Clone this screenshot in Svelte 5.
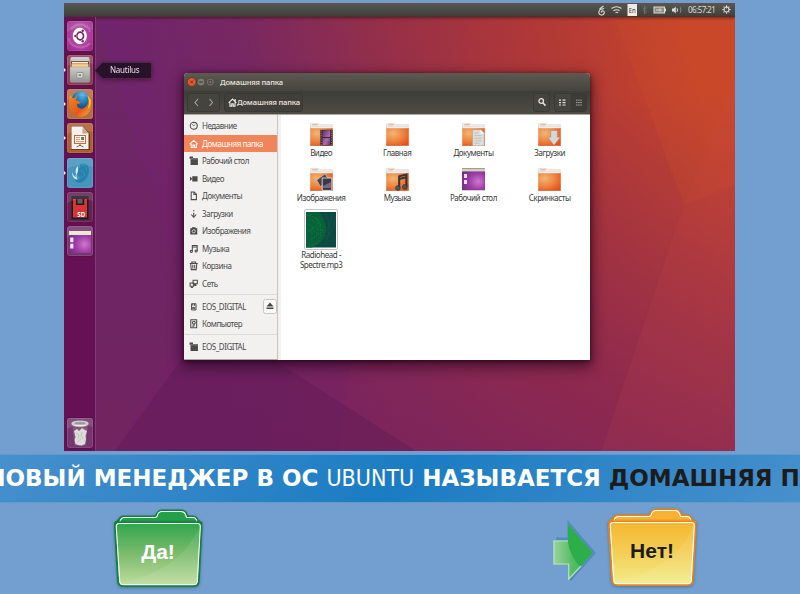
<script>
  const places = [
    ['clock', 'Недавние'], ['home', 'Домашняя папка'], ['folder', 'Рабочий стол'],
    ['video', 'Видео'], ['doc', 'Документы'], ['down', 'Загрузки'], ['camera', 'Изображения'],
    ['music', 'Музыка'], ['trash', 'Корзина'], ['net', 'Сеть']
  ];
  const files = [
    ['video', 'Видео'], ['plain', 'Главная'], ['docs', 'Документы'], ['down', 'Загрузки'],
    ['pics', 'Изображения'], ['music', 'Музыка'], ['desk', 'Рабочий стол'], ['plain', 'Скринкасты']
  ];
  const apps = [
    ['dash', false], ['cabinet', true], ['firefox', true], ['impress', true],
    ['bird', true], ['sd', false], ['desk', false]
  ];
</script>

{#snippet placeIcon(kind)}
  <svg class="pi" viewBox="0 0 10 10" fill="none" stroke="currentColor" stroke-width="1.1">
    {#if kind === 'clock'}
      <circle cx="5" cy="5" r="3.7" /><path d="M5 5.2 3.4 3.4M5 5.2 6.6 3.8M5 1v1.4" stroke-width=".8" />
    {:else if kind === 'home'}
      <path d="M.9 5.4 5 1.5l4.1 3.9M2.3 5v4h1.9V6.3h1.6V9h1.9V5" />
    {:else if kind === 'folder'}
      <path d="M.6.6h3.6v1.6H9.4V9.400H1.600V3H.6z" fill="currentColor" stroke="none" /><path d="M1.8 3h7.500" stroke="#f2f1f0" stroke-width=".4" />
    {:else if kind === 'video'}
      <path d="M3.4 2.4H9v5.400H3.4zM1 3l2 1.200v1.600L1 7.200z" fill="currentColor" stroke="none" />
    {:else if kind === 'doc'}
      <path d="M2.3 1h3.2l2.3 2.3v5.800H2.3zM5.2 1.2v2.4h2.4" />
    {:else if kind === 'down'}
      <path d="M5 4v4.7M2.4 5.8 5 8.7l2.6-2.9M5 1v1.3" />
    {:else if kind === 'camera'}
      <path d="M1.300 2.4h1.8V1.2h3.8v1.2h1.8V9H1.300z" fill="currentColor" stroke="none" /><circle cx="5" cy="5.6" r="1.7" stroke="#f2f1f0" stroke-width=".8" />
    {:else if kind === 'music'}
      <path d="M3.5 7.7V1.6H8.6V7.3M3.5 3.1h5" /><circle cx="2.4" cy="7.8" r="1.1" /><circle cx="7.5" cy="7.4" r="1.1" />
    {:else if kind === 'trash'}
      <path d="M.8 2.6h8.4M3 2.4V1h4v1.4M1.8 3.2 2.4 9.1h5.2l.6-5.9M4 4v3.8M6 4v3.8" />
    {:else if kind === 'net'}
      <path d="M4.3 1.3h4.5v3.8H4.3zM1.2 4.2h3.8v3.4H1.2zM2 9h2.3M6 6.6h2" /><path d="M4.5 5.3h3V7h-3z" fill="currentColor" stroke="none" />
    {:else if kind === 'card'}
      <path d="M2.6 1.8h4.8v6.6H2.6zM4 2v2M5.8 2v2M3.7 5.7h2.6v1.4H3.7z" stroke-width="1" />
    {:else}
      <path d="M1.900.8h6.200v8.400H1.900z" /><circle cx="5.1" cy="3.900" r="1.5" /><path d="M3.500 7.500h1.500l.7-2.600" />
    {/if}
  </svg>
{/snippet}

{#snippet deskIcon()}
  <path d="M0 1h23v21H0z" fill="url(#desk)" stroke="#6f3d72" stroke-width=".5" />
  <path d="M0 .4h23v3H0z" fill="#d9d4bd" /><path d="M0 .6h23" stroke="#77715f" stroke-width=".6" />
  <path d="M2 6h3v4H2zM2 12h3v4H2z" fill="#eddcee" />
{/snippet}

{#snippet fileIcon(kind)}
  <svg class="fi" viewBox="0 0 23 23">
    {#if kind === 'desk'}
      {@render deskIcon()}
    {:else}
      <path d="M.5 5V1Q.5.4 1 .4h7L10 1.7h12.3V6H.5z" fill="#f3efec" stroke="#d2cdca" stroke-width=".6" />
      <path d="M2.3 1.8h5.4" stroke="#f0a16b" /><path d="M.5 3.6h22" stroke="#d8d4d1" stroke-width=".5" />
      <path d="M.2 5.2h22.6V22q0 .6-.6.6H.8q-.6 0-.6-.6z" fill="url(#fold)" />
      <path d="M.2 22.4h22.6" stroke="#b84416" stroke-width=".6" />
      {#if kind === 'video'}
        <path d="M10.3 6.8h12.2v15.7H10.3z" fill="#36282f" /><path d="M12.5 7.3h7.8v6.8h-7.8zM12.5 15h7.8v7h-7.8z" fill="url(#film)" />
        <path d="M11.3 7.5v15M21.5 7.5v15" stroke="#a08c88" stroke-width=".8" stroke-dasharray="1 1.3" />
      {:else if kind === 'docs'}
        <path d="M10.6 6.8h8.3l3.3 3.6v12.4H10.6z" fill="#dededc" stroke="#a8a39f" stroke-width=".5" />
        <path d="M12.4 10h4M12.4 12.6h7.5M12.4 15.2h7.5M12.4 17.8h7.5M12.4 20.2h5" stroke="#b7b7b7" stroke-width=".8" />
        <path d="M18.6 6.8v3.7h3.6z" fill="#fff" />
      {:else if kind === 'down'}
        <path d="M12.7 7.5h6.6v6.8h3L16 22.2l-6.3-7.9h3z" fill="#d7d7d5" stroke="#9b8a82" stroke-width=".5" />
      {:else if kind === 'pics'}
        <path d="M6.7 12.1 15 6l4 6-8.5 6.8z" fill="#4a414c" stroke="#c4bdbd" stroke-width=".7" />
        <path d="M12.2 10h9.6v12.4h-9.6z" fill="#3f3747" stroke="#eee" stroke-width=".8" /><path d="M13 18l8-4v6h-8z" fill="#75677c" />
      {:else if kind === 'music'}
        <path d="M13.2 20V8.3l7.2-1.8v12" fill="none" stroke="#343536" stroke-width="2.1" /><path d="M13.2 10.9l7.2-1.6" stroke="#343536" stroke-width="2" />
        <circle cx="11.9" cy="20" r="2.3" fill="#555658" stroke="#29292a" stroke-width=".7" /><circle cx="18.8" cy="18.9" r="2.3" fill="#555658" stroke="#29292a" stroke-width=".7" />
      {/if}
    {/if}
  </svg>
{/snippet}

{#snippet appIcon(kind)}
  <svg class="tile {kind}" viewBox="0 0 26 30">
    {#if kind === 'dash'}
      <path d="M4 8c5-7 17-6 19 3M2 17c0 9 14 13 21 5" fill="none" stroke="#e6a9d9" stroke-opacity=".3" stroke-width="2" />
      <ellipse cx="12.8" cy="15" rx="7" ry="8.2" fill="#fff" />
      <ellipse cx="13.2" cy="15" rx="3.3" ry="3.9" fill="none" stroke="#792165" stroke-width="1.7" />
      <path d="M8 15h2.5M14.8 10.8l1.3-2M14.8 19l1.3 2" stroke="#fff" stroke-width="1.2" />
      <g fill="#792165"><circle cx="8.4" cy="15" r="1.2" /><circle cx="15.7" cy="9.7" r="1.2" /><circle cx="15.7" cy="20.2" r="1.2" /></g>
    {:else if kind === 'cabinet'}
      <path d="M3.5 3.5Q3.5 2 5 2h16q1.5 0 1.5 1.5V26H3.5z" fill="#c9c7c3" />
      <path d="M4 6h18v7H4z" fill="#5d4637" /><path d="M5 7.5h16v6H5z" fill="#e4954e" /><path d="M4.5 9.3h17v4h-17z" fill="#f5cf91" /><path d="M5 7.6h16" stroke="#fff" />
      <path d="M3 12h20v13.5q0 2-2 2H5q-2 0-2-2z" fill="url(#metal)" stroke="#888" stroke-width=".4" />
      <rect x="9.8" y="17.5" width="6.2" height="5.5" rx=".8" fill="#ddd" stroke="#81817d" stroke-width=".8" /><rect x="11.7" y="19.2" width="2.4" height="2" fill="#81817d" />
    {:else if kind === 'firefox'}
      <ellipse cx="13.500" cy="13.500" rx="9.6" ry="11.6" fill="url(#globe)" />
      <path d="M3.5 5.5C1 12 1.5 23 9 26.5c8 4 16-3 15.2-12-.3-4-2-7-4-8.5 3 7-.5 12.5-4.5 13.5-4 .8-6.4-1.8-5.6-4.8 1.4 1 3.2-.5 4-1.4-2-.3-2.6-2.2-5-1.8-.5-1.6.5-3 1.8-4-2-.1-3 .6-3.8 1.7C5.5 9 4 8 3.5 5.5z" fill="url(#fox)" />
      <path d="M20 6c3 5 2 11 .5 14 3-2 4-6 3-10z" fill="#f9cf35" />
    {:else if kind === 'impress'}
      <path d="M4 3h12l7 8v16H4z" fill="#41210f" opacity=".55" /><path d="M4.5 3.5h11l6 7v15.5h-17z" fill="#f4f3ef" /><path d="M15.5 3.5v7h6z" fill="#caa58e" />
      <path d="M7.500 12.500h11v8h-11z" fill="#fff8ee" stroke="#cb6a45" stroke-width="1.1" /><path d="M9 14.5h4M9 16.5h4M9 18.5h8" stroke="#dd9c78" /><path d="M14 14h3v3h-3z" fill="#55885e" />
      <path d="M13 21v1.5M9.5 24l3.5-1.7 3.5 1.7" stroke="#8b4c2e" fill="none" stroke-width=".9" />
    {:else if kind === 'bird'}
      <path d="M13 6c4-2 8 0 8.5 4 1 5-1 11-6 14-3 1.4-6 .5-8-2 3 .5 5-1 6-3-2 0-3-2-3-4 0-3 1-5 3-6z" fill="#2780ad" />
      <path d="M14 8c4-1 7 2 5 5M12 13c3-1 6 1 5 4M11 20c3 0 5-1 7-3" stroke="#3b93bc" fill="none" />
      <path d="M5.2 14c0 5 2 7 5.5 7.5-1-1.5-1.6-3.5-1.2-5.6-1 1-1 2-.6 3.4-2-.8-3-2.6-3.7-5.3zM10.5 8c-2 3-2.5 6-1 9 1-3 2.5-5 1-9z" fill="#dbecef" />
    {:else if kind === 'sd'}
      <path d="M4.500 4h17v23.500h-17z" fill="#25191c" /><path d="M6 7H9v6h8.2V7H20v18.5H6z" fill="#d43634" /><path d="M10.500 7h5v4.5h-5z" fill="#675b5e" />
      <text x="10.3" y="24.500" fill="#fff" font-family="Noto Sans, sans-serif" font-weight="700" font-size="7.500" textLength="8" lengthAdjust="spacingAndGlyphs">SD</text>
    {:else if kind === 'desk'}
      <path d="M2 5.5h22V27H2z" fill="url(#desk)" /><path d="M2 5h22v4H2z" fill="#e9e5cf" /><path d="M3.2 11.5h3.2v4.7H3.2zM3.2 17.7h3.2v4.7H3.2z" fill="#f2e2f4" />
    {:else}
      <path d="M5.6 8h15L19 27q-6 2-11.500 0z" fill="#a9a4a8" opacity=".3" /><path d="M7 13l3-2 2 2 3-3 3 2 2 1-1.5 5 .5 3-1 5-3 1.500-4-.5-2.500-1-1-4 1-3z" fill="#dddcda" />
      <path d="M9 15l3 2-1 4M15 14l-1 5 3 2M10 24l4-3" stroke="#b9b6b5" stroke-width=".7" fill="none" />
      <ellipse cx="13" cy="5.700" rx="8.7" ry="3.300" fill="#c6c5c4" /><ellipse cx="13" cy="5.200" rx="5.500" ry="1.300" fill="#8f8790" /><path d="M7.500 7.500h11" stroke="#eee" />
    {/if}
    <path d="M0 0h26v9Q13 4 0 11z" fill="#fff" opacity=".12" />
    <rect x=".5" y=".5" width="25" height="29" rx="2" fill="none" stroke="#fff" stroke-opacity=".1" />
  </svg>
{/snippet}

{#snippet answer(id, dark, a, b, c, tone)}
  <svg class="answer" viewBox="0 0 94 84">
    <defs>
      <linearGradient {id} x2="0" y2="1"><stop stop-color={a} /><stop offset=".5" stop-color={b} /><stop offset="1" stop-color={c} /></linearGradient>
    </defs>
    <path d="M6 22L4 17l4-3q1-3.500 5-3.500h30q2.500-.5 3-2.500 2-3.500 5-3.500h19q4 0 5.500 3.500l1.500 2.500h5q4 .5 4.500 4L90.500 17 89 22z" fill={tone} stroke={dark} stroke-width="2.200" />
    <path d="M9 15.500q1-4 4.500-4H44q2 0 2.500-2.500 1-3.500 4.500-3.500h19q3.500 0 4.500 3l1 3H82q3 0 4 4" fill="none" stroke="#fff" stroke-width="1.100" />
    <path d="M7.500 15.500h80" stroke={dark} stroke-width="2" opacity=".55" />
    <path d="M7 17h80.500q3.500 0 3 5L87.700 75.500q-.3 4.500-4.700 4.500H12q-4.500 0-4.800-4.500L4 22q-.4-5 3-5z" fill="url(#{id})" stroke={dark} stroke-width="2" />
    <path d="M88 23Q65 68 8.500 76l1 2.500h74q2.500 0 2.500-3z" fill="#fff" opacity=".09" />
    <path d="M8 17.500h78.500q3 0 2.800 3.500L86.300 75q-.3 3.700-4 3.700H12.500q-3.500 0-3.800-3.700L5.300 21Q5 17.500 8 17.500z" fill="none" stroke="#fff" stroke-width="1.100" />
  </svg>
{/snippet}

<svg class="defs" width="0" height="0">
  <defs>
    <radialGradient id="fold" cx=".3" cy=".3" r=".85"><stop stop-color="#f2b673" /><stop offset=".5" stop-color="#ee8744" /><stop offset="1" stop-color="#e65118" /></radialGradient>
    <radialGradient id="desk" cx=".7" cy=".6" r=".75"><stop stop-color="#d078c8" /><stop offset=".5" stop-color="#a03eaa" /><stop offset="1" stop-color="#713083" /></radialGradient>
    <linearGradient id="film" x2="1" y2="1"><stop stop-color="#5a3260" /><stop offset=".6" stop-color="#b068b5" /><stop offset="1" stop-color="#583457" /></linearGradient>
    <linearGradient id="metal" x2="0" y2="1"><stop stop-color="#cfcfcc" /><stop offset="1" stop-color="#92928f" /></linearGradient>
    <radialGradient id="globe" cx=".6" cy=".2"><stop stop-color="#45b5ea" /><stop offset="1" stop-color="#16558f" /></radialGradient>
    <linearGradient id="fox" x2="1" y2="1"><stop stop-color="#f28b1e" /><stop offset=".6" stop-color="#e7551d" /><stop offset="1" stop-color="#f8b92c" /></linearGradient>
  </defs>
</svg>

<main>
  <section class="desktop">
    <svg class="wall" viewBox="0 0 671 448" preserveAspectRatio="none">
      <defs>
        <linearGradient id="bg" gradientUnits="userSpaceOnUse" x1="80" y1="190" x2="630" y2="60"><stop stop-color="#6f246c" /><stop offset=".23" stop-color="#772862" /><stop offset=".5" stop-color="#983047" /><stop offset=".75" stop-color="#b03936" /><stop offset="1" stop-color="#c8472b" /></linearGradient>
        <linearGradient id="low" x2="0" y2="1"><stop offset=".2" stop-color="#762060" stop-opacity="0" /><stop offset="1" stop-color="#762060" stop-opacity=".72" /></linearGradient>
      </defs>
      <path d="M0 0h671v448H0z" fill="url(#bg)" /><path d="M0 0h671v448H0z" fill="url(#low)" />
      <path d="M550 14l70 188 51-20V14z" fill="#cf4d2a" opacity=".22" />
      <path d="M671 75L620 202 537 448h134z" fill="#d14a46" opacity=".15" />
      <path d="M411 14L310 175l-35 273h262l83-246L550 14z" fill="#be3a3d" opacity=".05" />
      <path d="M31 14l98 297-78 137H31z" fill="#6a2a58" opacity=".3" />
      <path d="M51 448L124 347l70 0 158 101z" fill="#55164f" opacity=".3" />
    </svg>
    <header class="topbar">
      <svg class="tray" viewBox="0 0 84 12" fill="none" stroke="#dfdbd2" stroke-width="1">
        <path d="M7.500 2L4 4.500v1l4-1M4 5.500Q1.500 9.500 4.500 10.800q3 .8 3.800-1.800.3-2-1.500-2.300-1.800.3-1.300 2" stroke-width="1.100" />
        <path d="M15.500 4.500q5-3.500 10 0M17.500 6.800q3-2.200 6 0M19.500 8.800q1.300-1 2.600 0" stroke-width="1.100" />
        <rect x="31.500" y="0" width="9.500" height="12" fill="#eeebe5" stroke="none" />
        <text x="32.700" y="8.500" fill="#34332f" stroke="none" font-family="Noto Sans,sans-serif" font-size="7" textLength="7" lengthAdjust="spacingAndGlyphs">En</text>
        <path d="M47 4l3.500 4-2 2V2l2 1.800L47 7.500" stroke="#76746c" stroke-width=".8" />
        <rect x="58" y="3" width="10.500" height="6" fill="#8e8b83" /><path d="M60 6h6M64 4.500v3M69.500 4.500v3" />
        <path d="M76 4.500h1.800l2-2v7l-2-2H76z" fill="#dfdbd2" stroke="none" /><path d="M81 4.200q1.200 1.800 0 3.600" />
      </svg>
      <svg class="wave" viewBox="0 0 4 12" fill="none" stroke="#8b877e"><path d="M0 3q2 3 0 6" /></svg>
      <time>06:57:21</time>
      <svg class="gear" viewBox="0 0 10 10" fill="none" stroke="#dfdbd2"><circle cx="5" cy="5" r="2.700" stroke-width="1.200" /><path d="M5 .3V4M5 8v1.800M.3 5H2M8 5h1.700M1.700 1.700l1 1M7.300 7.300l1 1M1.700 8.300l1-1M7.300 2.700l1-1" stroke-width="1.200" /></svg>
    </header>
    <nav class="launcher">
      {#each apps as [kind, running]}
        <div class="slot" class:running>{@render appIcon(kind)}</div>
      {/each}
      <div class="slot last">{@render appIcon('bin')}</div>
    </nav>
    <div class="tip"><svg viewBox="0 0 57 17"><path d="M0 8.500L7 .8Q7.500.5 8.300.5H54.500q2 0 2 2v12q0 2-2 2H8.300q-.8 0-1.300-.5z" fill="#28122a" stroke="#51304f" stroke-width=".7" /></svg><span>Nautilus</span></div>

    <div class="window">
      <div class="title">
        <svg viewBox="0 0 30 10"><circle cx="4.700" cy="5" r="4.300" fill="#e9592b" stroke="#46372f" stroke-width=".6" /><path d="M3.300 3.600l2.800 2.800m0-2.800L3.300 6.400" stroke="#682b18" stroke-width=".9" />
          <circle cx="14" cy="5" r="4" fill="#7b7a73" stroke="#3a3934" stroke-width=".6" /><path d="M12 5h4" stroke="#3b3a36" />
          <circle cx="23.300" cy="5" r="4" fill="#73726b" stroke="#3a3934" stroke-width=".6" /><path d="M21.800 3.300h3v3.400h-3z" fill="none" stroke="#3b3a36" stroke-width=".8" /></svg>
        <b>Домашняя папка</b>
      </div>
      <div class="toolbar">
        <div class="btn nav"><svg viewBox="0 0 33 19" fill="none" stroke="#aaa79f" stroke-width="1.100"><path d="M11 6L8 9.500l3 3.500M22.500 6l3 3.500-3 3.500" /></svg></div>
        <div class="btn path"><svg viewBox="0 0 10 10" fill="none" stroke="#f0eee9" stroke-width="1.200"><path d="M.7 5.300L5 1.200l4.300 4.100M2.200 5v4h2V6.300h1.600V9h2V5M8 1v3" /></svg><b>Домашняя папка</b></div>
        <div class="btn search"><svg viewBox="0 0 10 10" fill="none" stroke="#e6e3dc"><circle cx="4.200" cy="4" r="2.300" stroke-width="1.300" /><path d="M6 6l2.500 2.600" stroke-width="1.600" /></svg></div>
        <div class="btn views"><svg viewBox="0 0 33 19" fill="none" stroke="#e4e1db" stroke-width="1.200"><path d="M5 7.200h2M8.500 7.200h3M5 9.600h2M8.500 9.600h3M5 12h2M8.500 12h3" /><path d="M16.500 0H33v19H16.500z" fill="#373631" stroke="none" opacity=".6" /><path d="M22 7.200h6M22 9.600h6M22 12h6" stroke="#a5a29a" stroke-dasharray="1.600 .5" stroke-width="1" /></svg></div>
      </div>
      <div class="body">
        <aside>
          {#each places as [kind, name]}
            <div class="place" class:active={kind === 'home'}>{@render placeIcon(kind)}<span>{name}</span></div>
          {/each}
          <hr />
          <div class="place">{@render placeIcon('card')}<span>EOS_DIGITAL</span><i class="eject"><svg viewBox="0 0 10 10" fill="#494945"><path d="M5 1.500l3.500 4H1.500zM1.500 6.500h7V8h-7z" /></svg></i></div>
          <div class="place">{@render placeIcon('disk')}<span>Компьютер</span></div>
          <hr />
          <div class="place">{@render placeIcon('folder')}<span>EOS_DIGITAL</span></div>
        </aside>
        <div class="files">
          {#each files as [kind, name]}
            <div class="file">{@render fileIcon(kind)}<span>{name}</span></div>
          {/each}
          <div class="file song">
            <svg viewBox="0 0 34 41">
              <rect x=".5" y=".5" width="33" height="40" rx="1.500" fill="#fff" stroke="#c6c6c6" />
              <path d="M2 3h30v35.500H2z" fill="#0d4a43" />
              <path d="M2 3h13q10 12 6 23Q18 35 8 38.500H2z" fill="#08613a" />
              <path d="M3 6q15 3 14 17T6 36M6 10l8 5-7 6 8 4-9 6M4 15l5 3-5 4 6 3M12 9l5 7-5 4 7 2" fill="none" stroke="#16954e" stroke-opacity=".75" stroke-width="1" stroke-dasharray="1 1.700" />
              <path d="M22 5q6 12 0 29M28 4q-1 14-7 20M31 10q-2 14-10 18" fill="none" stroke="#16625a" stroke-opacity=".5" stroke-width=".8" />
            </svg>
            <span>Radiohead -<br />Spectre.mp3</span>
          </div>
        </div>
      </div>
    </div>
  </section>

  <section class="banner"><p>ФАЙЛОВЫЙ МЕНЕДЖЕР В ОС <span>UBUNTU</span> НАЗЫВАЕТСЯ <em>ДОМАШНЯЯ ПАПКА</em></p></section>

  <section class="answers">
    <div class="choice yes">{@render answer('yes', '#13803d', '#2fa64b', '#7dbc6d', '#c0dda0', '#22a04a')}<strong>Да!</strong></div>
    <svg class="arrow" viewBox="0 0 48 64">
      <defs><linearGradient id="arr" x2="1" y2="0"><stop stop-color="#9bd49f" /><stop offset=".5" stop-color="#54bb62" /><stop offset="1" stop-color="#46b75a" /></linearGradient></defs>
      <path d="M6 19h13V4l25 29-24 27" fill="none" stroke="#3476ad" stroke-width="3" opacity=".45" />
      <path d="M3.500 20.500H18V4l24.500 29L18.500 60V44.500h-15z" fill="url(#arr)" />
      <path d="M18 4l24.500 29L30 47Q19 34 18 22z" fill="#2cae49" />
      <path d="M18 21H4v23h14.700v15L31 46" fill="none" stroke="#b4e2b7" stroke-width="1.200" />
    </svg>
    <div class="choice no">{@render answer('no', '#e8821c', '#f5b72f', '#f3cf57', '#f2ed8b', '#f7b330')}<strong>Нет!</strong></div>
  </section>
</main>

<style>
  :global(body) { margin: 0; background: #729fcf; }
  .defs { position: absolute; }
  main { width: 800px; height: 594px; overflow: hidden; background: #729fcf; display: flex; flex-direction: column; font-family: "Noto Sans", "Open Sans", sans-serif; }
  svg { display: block; flex: none; }
  .desktop { position: relative; width: 671px; height: 448px; margin: 3px 0 0 64px; flex: none; display: flex; flex-direction: column; overflow: hidden; }
  .wall { position: absolute; inset: 0; width: 671px; height: 448px; }
  .topbar { position: relative; height: 14px; background: linear-gradient(#59574f, #403f3a); border-bottom: 1px solid #443433; box-shadow: 0 1px 3px #3008; display: flex; justify-content: flex-end; align-items: center; padding-right: 4px; box-sizing: border-box; flex: none; }
  .tray { width: 84px; height: 12px; }
  .wave { width: 4px; height: 12px; }
  time { color: #dfdbd2; font-size: 8px; line-height: 12px; width: 28px; margin: 0 6px 0 4px; white-space: nowrap; letter-spacing: -.55px; }
  .gear { width: 9px; height: 9px; }
  .launcher { position: relative; width: 32px; flex: 1; box-sizing: border-box; background: #661156; border-right: 1px solid #7c3c74; padding: 3.500px 0 3.500px 3px; display: flex; flex-direction: column; gap: 4.300px; }
  .slot { position: relative; height: 30px; flex: none; }
  .slot.running::before { content: ""; position: absolute; left: -3px; top: 13px; border: 2px solid transparent; border-left: 2px solid #eee; border-right: 0; }
  .last { margin-top: auto; }
  .tile { width: 26px; height: 30px; border-radius: 2.500px; background: #75366e; box-shadow: 0 0 2px #3008; }
  .tile.dash { background: radial-gradient(#c660b4, #952287); }
  .tile.cabinet { background: #8d3b55; }
  .tile.firefox { background: #b56d42; }
  .tile.impress { background: #ad5f31; }
  .tile.bird { background: #4595bd; }
  .tile.sd { background: #622451; }
  .tip { position: absolute; left: 31px; top: 59px; width: 57px; height: 17px; filter: drop-shadow(0 1px 2px #2007); display: grid; }
  .tip svg { width: 57px; height: 17px; grid-area: 1/1; }
  .tip span { grid-area: 1/1; position: relative; color: #e5dfe4; font-size: 8px; line-height: 16px; padding-left: 15px; letter-spacing: -.25px; }
  .window { position: absolute; left: 120px; top: 70px; width: 406px; height: 286.500px; display: flex; flex-direction: column; border-radius: 4px 4px 0 0; box-shadow: 0 5px 14px 2px #1c001899, 0 1px 4px #200a; overflow: visible; background: #fff; }
  .title { height: 18px; flex: none; background: linear-gradient(#5c5a51, #45443e); border-radius: 4px 4px 0 0; display: flex; align-items: center; padding-left: 3px; color: #dfdbd2; }
  .title svg { width: 30px; height: 10px; }
  .title b { font-size: 7.500px; font-weight: 600; line-height: 16px; margin-left: 3px; letter-spacing: -.2px; white-space: nowrap; }
  .toolbar { height: 23.500px; flex: none; background: linear-gradient(#3e3d38, #4e4c45); border-bottom: 1px solid #aaa8a2; box-sizing: border-box; display: flex; align-items: center; padding: 0 3px; }
  .btn { height: 19px; box-sizing: border-box; border: 1px solid #393833; border-radius: 3px; background: #45443e; display: flex; align-items: center; overflow: hidden; }
  .nav, .views { width: 33px; }
  .nav svg, .views svg { width: 33px; height: 19px; margin-left: -1px; }
  .path { width: 79px; margin-left: 4px; padding-left: 3px; background: #403f39; color: #e1ddd5; }
  .path svg { width: 9px; height: 9px; }
  .path b { font-size: 7.500px; font-weight: 600; white-space: nowrap; line-height: 16px; letter-spacing: -.2px; }
  .search { width: 17px; margin-left: auto; justify-content: center; margin-right: 4px; }
  .search svg { width: 10px; height: 10px; }
  .body { display: flex; flex: 1; min-height: 0; }
  aside { width: 94px; box-sizing: border-box; border-right: 1px solid #c7c5c2; background: #f2f1f0; padding-top: 2.500px; border-bottom: 1px solid #aaa; flex: none; }
  .place { position: relative; height: 17.500px; display: flex; align-items: center; padding-left: 4.500px; color: #4b4b49; font-size: 8px; white-space: nowrap; }
  .place span { margin-left: 4px; line-height: 17px; letter-spacing: -.45px; }
  .active { background: #f18458; color: #fff; }
  .pi { width: 9.500px; height: 9.500px; }
  hr { height: 1px; border: 0; background: #dedcda; margin: 1.500px 0 3px; }
  .eject { position: absolute; right: 0; top: 1px; width: 14px; height: 15px; box-sizing: border-box; border: 1px solid #c7c5c2; border-radius: 2.500px; background: #fafafa; display: grid; place-items: center; }
  .eject svg { width: 10px; height: 10px; }
  .files { border-left: 3px solid #f2f1f0; padding: 8.500px 0 0 2px; display: grid; grid-template-columns: repeat(4, 76.200px); grid-template-rows: 45px 41px 60px; flex: 1; }
  .file { display: flex; flex-direction: column; align-items: center; font-size: 8px; line-height: 10px; text-align: center; color: #3a3a3a; white-space: nowrap; letter-spacing: -.45px; }
  .fi { width: 23px; height: 23px; }
  .file span { margin-top: 1.500px; }
  .song svg { width: 34px; height: 41px; margin-top: -.5px; }
  .song span { margin-top: .5px; }
  .banner { height: 47px; margin-top: 3px; border-top: 1px solid #6299ce; border-bottom: 1px solid #6399cd; flex: none; background: linear-gradient(135deg, #4890cc 0%, #1a7cc3 50%, #4890cc 100%); display: flex; justify-content: center; align-items: center; overflow: hidden; }
  .banner p { margin: 0 0 2px; white-space: nowrap; flex: none; font: 700 23px/44px "DejaVu Sans", sans-serif; color: #fff; }
  .banner span { font-family: "DejaVu Sans Condensed", "DejaVu Sans"; font-stretch: condensed; font-weight: 400; }
  .banner em { font-style: normal; color: #1c1c1c; }
  .answers { flex: 1; display: flex; align-items: flex-start; }
  .choice { width: 94px; height: 84px; display: grid; flex: none; }
  .answer { grid-area: 1/1; width: 94px; height: 84px; filter: drop-shadow(0 1px 1.500px #24466877); }
  .choice strong { grid-area: 1/1; position: relative; align-self: start; text-align: center; font: 700 21px/24px "Liberation Sans", sans-serif; margin-top: 34px; }
  .yes { margin: 3px 0 0 111px; color: #fff; }
  .arrow { width: 48px; height: 64px; margin: 17px 0 0 345px; }
  .no { margin: 2px 0 0 7px; color: #1c1c1c; }
</style>
